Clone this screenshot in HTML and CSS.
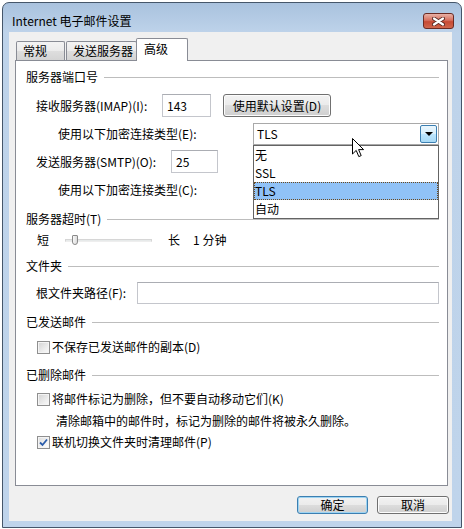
FILE: index.html
```html
<!DOCTYPE html>
<html lang="zh-CN">

<head>
    <meta charset="UTF-8">
    <title>Internet 电子邮件设置</title>
    <link rel="stylesheet" href="styles.css">
</head>

<body>

    <div class="window">
        <div class="titlebar">
            <span class="title">Internet 电子邮件设置</span>
            <div class="close-btn">
                <svg width="13" height="9" viewBox="0 0 13 9">
                    <path d="M2 1.5 L11 7.5 M11 1.5 L2 7.5" stroke="#5a2a24" stroke-width="4" stroke-linecap="round"/>
                    <path d="M2 1.5 L11 7.5 M11 1.5 L2 7.5" stroke="#fff" stroke-width="2.2" stroke-linecap="round"/>
                </svg>
            </div>
        </div>

        <div class="client">
            <div class="tabs">
                <div class="tab tab-general">常规</div>
                <div class="tab tab-send">发送服务器</div>
                <div class="tab tab-advanced active">高级</div>
            </div>

            <div class="panel">
                <div class="legend">服务器端口号</div>

                <div class="row row-imap">
                    <label class="label-imap">接收服务器(IMAP)(I):</label>
                    <input type="text" class="textbox port-imap" value="143">
                    <button class="btn btn-default-settings">使用默认设置(D)</button>
                </div>

                <div class="row row-enc">
                    <label class="label-enc">使用以下加密连接类型(E):</label>
                    <div class="combo">
                        <span class="combo-value">TLS</span>
                        <span class="combo-arrow"></span>
                        <ul class="combo-list">
                            <li>无</li>
                            <li>SSL</li>
                            <li class="selected">TLS</li>
                            <li>自动</li>
                        </ul>
                        <svg class="cursor" width="13" height="20" viewBox="0 0 13 20">
                            <path d="M0.5 0.5 L0.5 16 L4.2 12.4 L6.8 18.6 L9.2 17.6 L6.6 11.6 L11.6 11.6 Z" fill="#fff" stroke="#000" stroke-width="1" stroke-linejoin="miter"/>
                        </svg>
                    </div>
                </div>

                <div class="row row-smtp">
                    <label class="label-smtp">发送服务器(SMTP)(O):</label>
                    <input type="text" class="textbox port-smtp" value="25">
                </div>

                <div class="row row-enc2">
                    <label>使用以下加密连接类型(C):</label>
                </div>

                <div class="legend legend-timeout">服务器超时(T)</div>

                <div class="row row-slider">
                    <span>短</span>
                    <div class="slider">
                        <span class="slider-thumb"></span>
                    </div>
                    <span class="slider-long">长</span>
                    <span class="slider-value">1 分钟</span>
                </div>

                <div class="legend legend-section">文件夹</div>

                <div class="row row-root">
                    <label class="label-root">根文件夹路径(F):</label>
                    <input type="text" class="textbox root-path" value="">
                </div>

                <div class="legend legend-section">已发送邮件</div>

                <div class="row row-check row-sent">
                    <span class="check"></span>
                    <span>不保存已发送邮件的副本(D)</span>
                </div>

                <div class="legend legend-deleted">已删除邮件</div>

                <div class="row row-check row-mark">
                    <span class="check"></span>
                    <span>将邮件标记为删除，但不要自动移动它们(K)</span>
                </div>
                <div class="row row-note">清除邮箱中的邮件时，标记为删除的邮件将被永久删除。</div>
                <div class="row row-check row-purge">
                    <span class="check checked">
                        <svg width="9" height="9" viewBox="0 0 9 9">
                            <path d="M1 4.5 L3.5 7 L8 1.5" fill="none" stroke="#2a5caa" stroke-width="1.8"/>
                        </svg>
                    </span>
                    <span>联机切换文件夹时清理邮件(P)</span>
                </div>
            </div>

            <div class="actions">
                <button class="btn btn-dialog btn-ok">确定</button>
                <button class="btn btn-dialog">取消</button>
            </div>
        </div>
    </div>

</body>

</html>
```

FILE: styles.css
```css
* {
    box-sizing: border-box;
}

body {
    margin: 0;
    font-family: "Noto Sans CJK SC", sans-serif;
    font-size: 12px;
    color: #000;
    background-color: #fff;
}

.window {
    margin: 2px 0 0 2px;
    width: 460px;
    height: 526px;
    border: 1px solid #45566a;
    border-radius: 7px 7px 0 0;
    background: linear-gradient(#a9c2de 0, #bed3ea 30px, #bfd4eb 100%);
    padding: 0 9px 6px 6px;
    display: flex;
    flex-direction: column;
}

/* title bar */

.titlebar {
    height: 29px;
    display: flex;
    align-items: flex-start;
    justify-content: space-between;
    margin-right: -2px;
}

.title {
    margin-left: 3px;
    padding-top: 10px;
    line-height: 16px;
}

.close-btn {
    margin-top: 10px;
    width: 31px;
    height: 16px;
    border: 1px solid #6b2b24;
    border-radius: 3px;
    background: linear-gradient(#e8b1a6 0, #d7705f 45%, #c74a34 55%, #d0664d 100%);
    display: flex;
    align-items: center;
    justify-content: center;
}

/* client area */

.client {
    flex: 1;
    background-color: #f0f0f0;
    padding: 6px 4px 0 6px;
    display: flex;
    flex-direction: column;
}

.tabs {
    display: flex;
    align-items: flex-end;
    height: 23px;
    margin-bottom: -1px;
    padding-left: 1px;
    position: relative;
    z-index: 1;
}

.tab {
    height: 19px;
    margin-bottom: 1px;
    padding-left: 6px;
    line-height: 17px;
    border: 1px solid #898c95;
    border-bottom: none;
    border-radius: 2px 2px 0 0;
    background: linear-gradient(#f3f3f3 0, #ebebeb 50%, #dedede 50%, #d4d4d4 100%);
}

.tab-general {
    width: 49px;
}

.tab-send {
    width: 71px;
    margin-left: 1px;
}

.tab-advanced {
    width: 52px;
    margin-left: -1px;
}

.tab.active {
    height: 23px;
    margin-bottom: 0;
    padding-left: 7px;
    line-height: 19px;
    background: #fff;
}

.panel {
    height: 426px;
    border: 1px solid #898c95;
    background-color: #fff;
    padding: 8px 8px 0 10px;
}

/* group titles */

.legend {
    display: flex;
    align-items: center;
    height: 16px;
    line-height: 16px;
}

.legend::after {
    content: "";
    flex: 1;
    height: 1px;
    margin-left: 6px;
    background-color: #bdbdbd;
}

.legend-timeout {
    margin-top: 10px;
}

.legend-section {
    margin-top: 10px;
}

.legend-deleted {
    margin-top: 12px;
}

/* rows */

.row {
    display: flex;
    align-items: center;
    margin-left: 10px;
    line-height: 16px;
}

.row label {
    flex: none;
}

.row-imap {
    margin-top: 9px;
    height: 23px;
}

.label-imap {
    width: 126px;
}

.textbox {
    height: 23px;
    border: 1px solid #c4c6cc;
    border-top-color: #abadb3;
    padding: 0 0 0 4px;
    font-family: inherit;
    font-size: 12px;
    color: #000;
    background: #fff;
    outline: none;
}

.port-imap {
    width: 49px;
}

.btn {
    font-family: inherit;
    font-size: 12px;
    color: #000;
    border: 1px solid #707070;
    border-radius: 3px;
    background: linear-gradient(#f2f2f2 0, #ebebeb 50%, #dddddd 50%, #cfcfcf 100%);
    box-shadow: inset 0 0 0 1px #fcfcfc;
    padding: 0;
    line-height: 16px;
}

.btn-default-settings {
    margin-left: 12px;
    width: 108px;
    height: 23px;
}

.row-enc {
    margin-left: 32px;
    margin-top: 6px;
    height: 22px;
}

.label-enc {
    width: 195px;
}

.combo {
    position: relative;
    width: 186px;
    height: 22px;
    border: 1px solid #a9a9a9;
    background: #fff;
    display: flex;
    align-items: center;
    justify-content: space-between;
    padding: 0 1px 0 3px;
}

.combo-arrow {
    width: 17px;
    height: 18px;
    border: 1px solid #3c7fb1;
    border-radius: 2px;
    background: linear-gradient(#eaf6fd 0, #d9f0fc 50%, #bee6fd 50%, #a7d9f5 100%);
    position: relative;
}

.combo-arrow::after {
    content: "";
    position: absolute;
    left: 4px;
    top: 6px;
    border-left: 4px solid transparent;
    border-right: 4px solid transparent;
    border-top: 4px solid #000;
}

.combo-list {
    position: absolute;
    top: 21px;
    left: -1px;
    width: 186px;
    margin: 0;
    padding: 0;
    list-style: none;
    border: 1px solid #646464;
    background: #fff;
    z-index: 2;
}

.combo-list li {
    height: 18px;
    line-height: 18px;
    padding-left: 1px;
}

.combo-list li.selected {
    background-color: #90c2f7;
    outline: 1px dotted #6b4a1f;
    outline-offset: -1px;
}

.cursor {
    position: absolute;
    left: 98px;
    top: 14px;
    z-index: 3;
}

.row-smtp {
    margin-top: 5px;
    height: 23px;
}

.label-smtp {
    width: 135px;
}

.port-smtp {
    width: 47px;
}

.row-enc2 {
    margin-left: 32px;
    margin-top: 6px;
    height: 22px;
}

/* slider */

.row-slider {
    margin-top: 5px;
    margin-left: 11px;
    height: 16px;
}

.slider {
    position: relative;
    margin-left: 16px;
    width: 87px;
    height: 3px;
    border: 1px solid #d6d6d6;
    border-bottom-color: #eeeeee;
    background: #e7eaea;
}

.slider-thumb {
    position: absolute;
    left: 6px;
    top: -5px;
    width: 6px;
    height: 10px;
    border: 1px solid #8a8a8a;
    border-radius: 1px 1px 3px 3px;
    background: linear-gradient(90deg, #f7f7f7, #dcdcdc);
}

.slider-long {
    margin-left: 16px;
}

.slider-value {
    margin-left: 13px;
}

.row-root {
    margin-top: 8px;
    height: 22px;
}

.label-root {
    width: 101px;
}

.root-path {
    width: 302px;
    height: 22px;
}

/* check boxes */

.row-check {
    margin-left: 11px;
    height: 16px;
}

.check {
    flex: none;
    width: 13px;
    height: 13px;
    margin-right: 2px;
    border: 1px solid #8f8f8f;
    background: linear-gradient(135deg, #d2d2d2 0, #f0f0f0 70%, #fafafa 100%);
    box-shadow: inset 0 0 0 1px #f4f4f4;
    display: flex;
    align-items: center;
    justify-content: center;
}

.check.checked {
    background: linear-gradient(135deg, #dcdcdc 0, #f6f6f6 70%, #ffffff 100%);
}

.row-sent {
    margin-top: 9px;
}

.row-mark {
    margin-top: 8px;
}

.row-note {
    margin-left: 30px;
    margin-top: 6px;
    height: 16px;
}

.row-purge {
    margin-top: 5px;
}

/* dialog buttons */

.actions {
    display: flex;
    justify-content: flex-end;
    gap: 9px;
    margin-top: 10px;
    margin-right: -1px;
}

.btn-dialog {
    width: 72px;
    height: 18px;
}

.btn-ok {
    width: 71px;
    border-color: #3c7fb1;
    box-shadow: inset 0 0 0 1px #9ed4f2;
}
```
